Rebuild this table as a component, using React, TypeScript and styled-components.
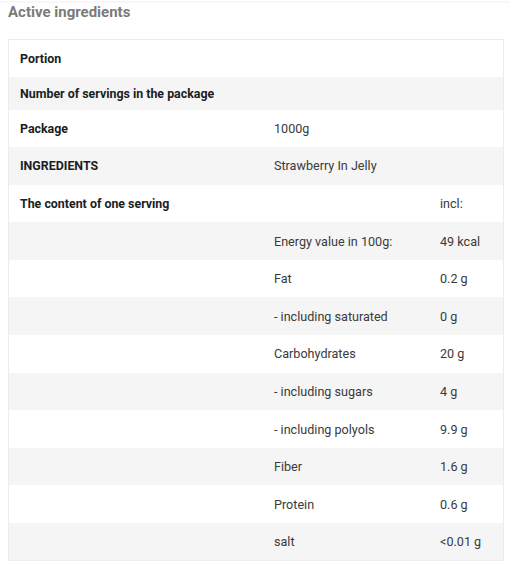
import React from "react";
import styled, { createGlobalStyle } from "styled-components";

const Global = createGlobalStyle`
  html, body { margin: 0; padding: 0; background: #fff; }
  body { font-family: Roboto, "Noto Sans", Arial, sans-serif; }
`;

const Page = styled.div`
  padding: 0 6px 0 8px;
  border-top: 2px solid #f7f7f7;
  margin-top: 1px;
`;

const Title = styled.h2`
  margin: 0;
  padding: 1px 0 0 0;
  height: 36px;
  box-sizing: border-box;
  font-size: 15px;
  font-weight: 700;
  color: #7b7b7b;
  line-height: 17px;
`;

const Table = styled.table`
  width: 100%;
  border-collapse: collapse;
  border: 1px solid #ececec;
  box-shadow: 0 0 1px rgba(0, 0, 0, 0.04);
`;

const Row = styled.tr<{ $shade: boolean; $h: number }>`
  background: ${(p) => (p.$shade ? "#f5f5f5" : "#ffffff")};
  height: ${(p) => p.$h}px;
`;

const Label = styled.td`
  width: 232px;
  padding: 0 11px;
  font-size: 12.4px;
  font-weight: 700;
  color: #1b1d22;
  vertical-align: middle;
`;

const Name = styled.td`
  width: 144px;
  padding: 0 11px;
  font-size: 12.6px;
  color: #3a3a3a;
  vertical-align: middle;
`;

const Amount = styled.td`
  padding: 0 11px 0 11px;
  font-size: 12.6px;
  color: #3a3a3a;
  vertical-align: middle;
`;

type R = { label?: string; name?: string; amount?: string; h?: number };

const rows: R[] = [
  { label: "Portion", h: 37 },
  { label: "Number of servings in the package", h: 33 },
  { label: "Package", name: "1000g" },
  { label: "INGREDIENTS", name: "Strawberry In Jelly" },
  { label: "The content of one serving", amount: "incl:" },
  { name: "Energy value in 100g:", amount: "49 kcal" },
  { name: "Fat", amount: "0.2 g" },
  { name: "- including saturated", amount: "0 g" },
  { name: "Carbohydrates", amount: "20 g" },
  { name: "- including sugars", amount: "4 g" },
  { name: "- including polyols", amount: "9.9 g" },
  { name: "Fiber", amount: "1.6 g" },
  { name: "Protein", amount: "0.6 g" },
  { name: "salt", amount: "<0.01 g" },
];

export default function App() {
  return (
    <>
      <Global />
      <Page>
        <Title>Active ingredients</Title>
        <Table>
          <tbody>
            {rows.map((r, i) => (
              <Row key={i} $shade={i % 2 === 1} $h={r.h ?? 37.6}>
                <Label>{r.label}</Label>
                <Name>{r.name}</Name>
                <Amount>{r.amount}</Amount>
              </Row>
            ))}
          </tbody>
        </Table>
      </Page>
    </>
  );
}
